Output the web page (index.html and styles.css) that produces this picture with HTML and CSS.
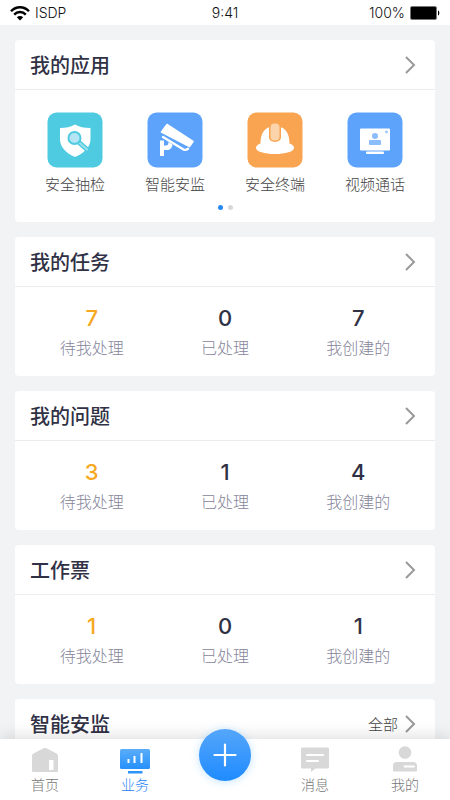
FILE: index.html
```html
<!DOCTYPE html>
<html lang="zh-CN">
<head>
<meta charset="utf-8">
<meta name="viewport" content="width=device-width, initial-scale=1">
<title>ISDP 业务</title>
<link rel="stylesheet" href="styles.css">
</head>
<body>
<header class="status">
  <div class="status-left">
    <svg class="wifi" width="20" height="16" viewBox="0 0 20 16" fill="none" stroke="#000" stroke-width="2.4">
      <path d="M1 6.2C6 .9 14 .9 19 6.2"/>
      <path d="M4.200 9.600c3.200-3.400 8.400-3.400 11.600 0"/>
      <path d="M10 15.600 6.800 12.300c1.800-1.800 4.600-1.800 6.400 0z" fill="#000" stroke="none"/>
    </svg>
    <span>ISDP</span>
  </div>
  <time>9:41</time>
  <div class="status-right">
    <span>100%</span>
    <svg width="30" height="14" viewBox="0 0 30 14"><rect x=".5" y=".5" width="26" height="13" rx="1.500" fill="#000" stroke="#777"/><path d="M28 4.500c1.800.5 1.800 4.500 0 5z" fill="#000"/></svg>
  </div>
</header>

<main class="content">
  <section class="card">
    <a class="card-head" href="#apps"><h2>我的应用</h2><svg class="chevron" width="12" height="18" viewBox="0 0 12 18"><path d="M2 1l8 8-8 8"/></svg></a>
    <nav class="apps">
      <a class="app" href="#check">
        <svg width="56" height="56" viewBox="0 0 56 56">
          <rect x=".5" y=".5" width="55" height="55" rx="9" fill="#4ecbe0"/>
          <path d="M28 12.500c4 2.500 9 3.500 15.500 3.500v11c0 8-6.500 14-15.500 18-9-4-15-10-15-18V16c6 0 11-1 15-3.500z" fill="#fff"/>
          <path d="M31.500 30l8.500 7.500" stroke="#4ecbe0" stroke-width="5" stroke-linecap="round"/>
          <path d="M31.500 30l8.500 7.500" stroke="#9be1ee" stroke-width="2" stroke-linecap="round"/>
          <circle cx="27.500" cy="26" r="6" fill="#b5e5f4" stroke="#4ecbe0" stroke-width="2"/>
        </svg>
        <span>安全抽检</span>
      </a>
      <a class="app" href="#monitor">
        <svg width="56" height="56" viewBox="0 0 56 56">
          <rect x=".5" y=".5" width="55" height="55" rx="9" fill="#5ea3fb"/>
          <path d="M20 12.500L46 29.500 42.500 34.500 14.500 20z" fill="#fff" stroke="#fff" stroke-width="1.500" stroke-linejoin="round"/>
          <path d="M16 25l20.500 12.500c1.800.9 2.800.6 4.500-.8" fill="none" stroke="#fff" stroke-width="2.400" stroke-linecap="round"/>
          <path d="M13 28.500h4v5h2c1.800 0 2.500-1 2.500-3.500l4 2.400c-.3 3.500-2.500 5.500-5.500 5.500h-3v6.100h-4z" fill="#fff"/>
        </svg>
        <span>智能安监</span>
      </a>
      <a class="app" href="#terminal">
        <svg width="56" height="56" viewBox="0 0 56 56">
          <rect x=".5" y=".5" width="55" height="55" rx="9" fill="#f9a450"/>
          <path d="M13.500 31.500C13.500 22 17 17 22 15.200V25c0 6.500 12 6.500 12 0v-9.800c5 1.800 8.500 6.800 8.500 16.300 3 1 4.500 2.500 4.500 4.500C47 39.500 38.500 42 28 42S9 39.500 9 36c0-2 1.500-3.500 4.500-4.500z" fill="#fff"/>
          <rect x="23.500" y="11.500" width="9" height="17" rx="4" fill="#fcd4ac"/>
        </svg>
        <span>安全终端</span>
      </a>
      <a class="app" href="#video">
        <svg width="56" height="56" viewBox="0 0 56 56">
          <rect x=".5" y=".5" width="55" height="55" rx="9" fill="#5ea3fb"/>
          <rect x="13" y="16.500" width="30" height="22" rx="1" fill="#fff"/>
          <rect x="19" y="39.500" width="18" height="2.500" rx="1" fill="#fff"/>
          <circle cx="28" cy="24" r="3" fill="#8bbcfc"/><rect x="22" y="28" width="12" height="5" rx="1" fill="#8bbcfc"/>
          <circle cx="39.500" cy="20" r="1.400" fill="#9bc6fd"/>
        </svg>
        <span>视频通话</span>
      </a>
    </nav>
    <div class="dots"><i class="dot dot-on"></i><i class="dot"></i></div>
  </section>

  <section class="card">
    <a class="card-head" href="#tasks"><h2>我的任务</h2><svg class="chevron" width="12" height="18" viewBox="0 0 12 18"><path d="M2 1l8 8-8 8"/></svg></a>
    <dl class="stats">
      <div class="stat pending"><dt>待我处理</dt><dd>7</dd></div>
      <div class="stat"><dt>已处理</dt><dd>0</dd></div>
      <div class="stat"><dt>我创建的</dt><dd>7</dd></div>
    </dl>
  </section>

  <section class="card">
    <a class="card-head" href="#issues"><h2>我的问题</h2><svg class="chevron" width="12" height="18" viewBox="0 0 12 18"><path d="M2 1l8 8-8 8"/></svg></a>
    <dl class="stats">
      <div class="stat pending"><dt>待我处理</dt><dd>3</dd></div>
      <div class="stat"><dt>已处理</dt><dd>1</dd></div>
      <div class="stat"><dt>我创建的</dt><dd>4</dd></div>
    </dl>
  </section>

  <section class="card">
    <a class="card-head" href="#tickets"><h2>工作票</h2><svg class="chevron" width="12" height="18" viewBox="0 0 12 18"><path d="M2 1l8 8-8 8"/></svg></a>
    <dl class="stats">
      <div class="stat pending"><dt>待我处理</dt><dd>1</dd></div>
      <div class="stat"><dt>已处理</dt><dd>0</dd></div>
      <div class="stat"><dt>我创建的</dt><dd>1</dd></div>
    </dl>
  </section>

  <section class="card">
    <a class="card-head" href="#smart"><h2>智能安监</h2><span class="all">全部</span><svg class="chevron" width="12" height="18" viewBox="0 0 12 18"><path d="M2 1l8 8-8 8"/></svg></a>
  </section>
</main>

<nav class="tabs">
  <a class="tab" href="#home">
    <svg width="30" height="28" viewBox="0 0 30 28"><path d="M3.500 7.500L13 2.400c1.300-.6 2.700-.6 4 0l9.500 5.100c.9.500 1.500 1.300 1.500 2.500v14.500c0 1-.5 1.500-1.500 1.500h-23c-1 0-1.500-.5-1.500-1.500V10c0-1.200.6-2 1.500-2.500z" fill="#d8d8d8"/><rect x="19" y="14" width="4.500" height="10" fill="#fff"/></svg>
    <span>首页</span>
  </a>
  <a class="tab tab-on" href="#business">
    <svg width="30" height="28" viewBox="0 0 30 28"><defs><linearGradient id="screen" x2="0" y2="1"><stop stop-color="#5aadfa"/><stop offset="1" stop-color="#2690fa"/></linearGradient></defs><rect y="3" width="30" height="20" rx="1.500" fill="url(#screen)"/><path d="M8.500 17v-4M14.500 17v-7M21.500 17V7" stroke="#fff" stroke-width="2"/><rect x="8" y="25" width="14.500" height="2.500" fill="#2f93f8"/></svg>
    <span>业务</span>
  </a>
  <div class="tab"><button class="add" type="button" aria-label="新建"><svg width="24" height="24" viewBox="0 0 24 24"><path d="M12 1.500v21M1.500 12h21" stroke="#fff" stroke-width="2.200" stroke-linecap="round"/></svg></button></div>
  <a class="tab" href="#messages">
    <svg width="30" height="28" viewBox="0 0 30 28"><path d="M2.500 1.500h25c1 0 1.500.5 1.500 1.500v18c0 1-.5 1.500-1.500 1.500H15.500L11 26v-3.500H2.500c-1 0-1.500-.5-1.500-1.500V3c0-1 .5-1.500 1.500-1.500z" fill="#d8d8d8"/><path d="M7 9h16M7 15h11" stroke="#fff" stroke-width="2.200" stroke-linecap="round"/></svg>
    <span>消息</span>
  </a>
  <a class="tab" href="#me">
    <svg width="30" height="28" viewBox="0 0 30 28"><circle cx="15" cy="6.500" r="6.300" fill="#d8d8d8"/><path d="M6.500 16h17c2 0 3.500 1.400 3.500 3.500V24c0 1-.5 1.500-1.500 1.500h-21C3.500 25.500 3 25 3 24v-4.500C3 17.400 4.500 16 6.500 16z" fill="#d8d8d8"/><path d="M14.500 20.500H24" stroke="#fff" stroke-width="1.800" stroke-linecap="round"/></svg>
    <span>我的</span>
  </a>
</nav>
</body>
</html>
```
FILE: styles.css
```css
* { box-sizing: border-box; }

body {
  margin: 0;
  height: 100vh;
  display: flex;
  flex-direction: column;
  overflow: hidden;
  background: #f1f3f5;
  color: #303145;
  font-family: "Noto Sans CJK SC", sans-serif;
}

a { color: inherit; text-decoration: none; }
h2, dl, dd { margin: 0; }
svg { display: block; flex: none; }

.status {
  display: grid;
  grid-template-columns: 1fr auto 1fr;
  align-items: center;
  padding: 0 10px;
  height: 25px;
  flex: none;
  background: #fff;
  color: #111;
  font: 300 14px/25px Inter, sans-serif;
}
.status-left, .status-right { display: flex; align-items: center; gap: 5px; }
.status-right { justify-content: flex-end; }

.content {
  flex: 1;
  min-height: 0;
  overflow: hidden;
  display: flex;
  flex-direction: column;
  gap: 15px;
  padding: 15px 15px 0;
}

.card { flex: none; background: #fff; border-radius: 4px; }
.card-head {
  display: flex;
  align-items: center;
  gap: 6px;
  height: 50px;
  padding: 0 19px 0 15px;
  border-bottom: 1px solid #ebecf0;
}
.card-head h2 { flex: 1; font-size: 20px; line-height: 30px; font-weight: 500; }
.chevron { fill: none; stroke: #999; stroke-width: 2; }
.all { font-size: 15px; line-height: 24px; font-weight: 300; color: #444; }

.apps {
  display: grid;
  grid-template-columns: repeat(4, 1fr);
  padding: 22px 10px 0;
}
.app {
  display: flex;
  flex-direction: column;
  align-items: center;
  gap: 4px;
  font-size: 15px;
  line-height: 24px;
  font-weight: 300;
  color: #444;
}
.dots { display: flex; justify-content: center; gap: 5px; padding: 9px 0 12px; }
.dot { width: 5px; height: 5px; border-radius: 50%; background: #d8d8d8; }
.dot-on { background: #2589f5; }

.stats {
  display: grid;
  grid-template-columns: repeat(3, 1fr);
  padding: 15px 10px;
}
.stat {
  display: flex;
  flex-direction: column-reverse;
  align-items: center;
}
.stat dt { font-size: 16px; line-height: 27px; font-weight: 300; color: #85859a; }
.stat dd { font: 500 22px/32px Inter, sans-serif; }
.stat.pending dd { color: #f6a821; }

.tabs {
  position: relative;
  flex: none;
  display: grid;
  grid-template-columns: repeat(5, 1fr);
  background: #fff;
  height: 61px;
  box-shadow: 0 -2px 16px rgba(0, 0, 0, .14);
}
.tab {
  display: flex;
  flex-direction: column;
  align-items: center;
  padding-top: 7px;
  font-size: 14px;
  line-height: 21px;
  font-weight: 300;
  color: #777;
}
.tab-on { color: #1f84f5; }
.add {
  display: grid;
  place-items: center;
  flex: none;
  width: 52px;
  height: 52px;
  margin-top: -17px;
  padding: 0;
  border: 0;
  border-radius: 50%;
  background: linear-gradient(#55a6fa, #1f8bff);
  box-shadow: 0 1px 8px rgba(80, 180, 255, .35);
}
```
